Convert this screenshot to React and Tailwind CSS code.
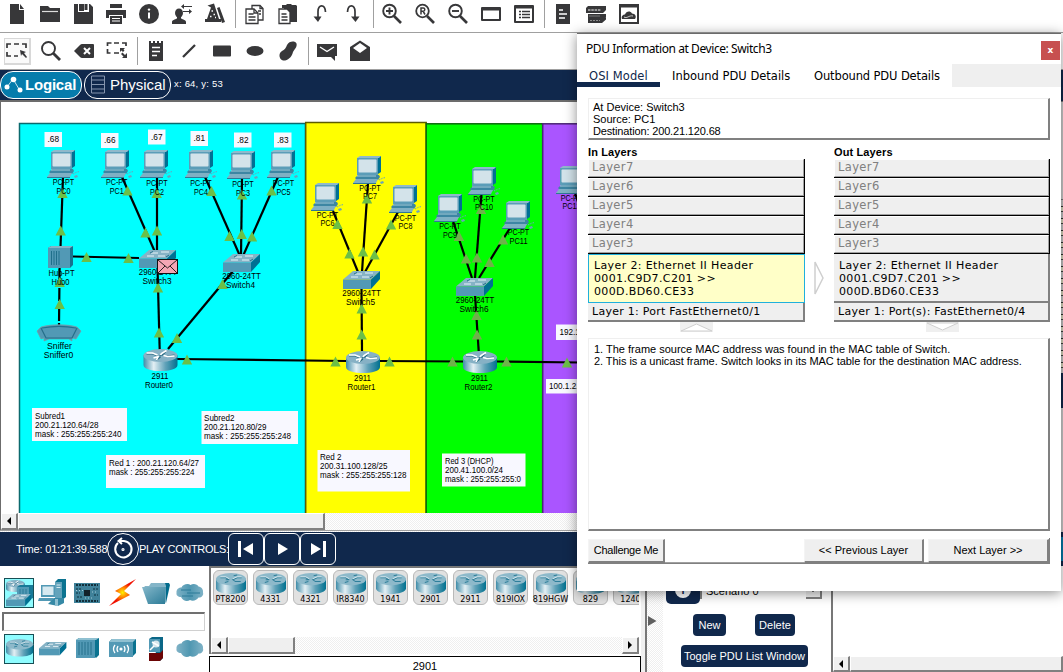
import React from "react";

const INK = "#373739";

/* ---------- toolbar icons (24 x 24) ---------- */
const toolIcons = {
  file: <path d="M5 2h9v6h5v14H5zM15 2l4 5h-4z" />,
  folder: (
    <>
      <path d="M2 4h8l2 2h10v14H2z" />
      <path d="M4 9.5h16" stroke="#ddd" strokeWidth="1.2" />
    </>
  ),
  save: <path fillRule="evenodd" d="M3 2h4v8h11V2h1l3 3v17H3zM13.500 2h3v6h-3zM8 2h5v7H8z" />,
  print: (
    <>
      <path d="M6 2h12v4H6zM2 8h20v8h-3v-3H5v3H2z" />
      <path d="M6 14h12v8H6z" />
      <path d="M8 16.500h8M8 19h8" stroke="#fff" strokeWidth="1" />
    </>
  ),
  info: (
    <>
      <circle cx="12" cy="12" r="10" />
      <path d="M12 10.500v6" stroke="#fff" strokeWidth="2" />
      <circle cx="12" cy="7.600" r="1.200" fill="#fff" />
    </>
  ),
  user: (
    <>
      <ellipse cx="9" cy="11" rx="4" ry="4.500" />
      <path d="M2 22v-2c0-2 3-2.500 5-3.500v-3h4v3c2 1 5 1.500 5 3.500v2zM11 4.500l3-2.500v2h8v1h-8v2zM22 9.500L19 7v2h-6v1h6v2z" />
    </>
  ),
  wizard: (
    <>
      <path d="M4.500 3.500L11 1.500l5 15.500h2v3H2v-3h2l4-11.500zM14 6l2.500-1L22 20l-3 1z" />
      <path d="M8.500 9h1.500M10.500 12.500h1.500M7 14.500h1.500M12 15.500h1" stroke="#fff" strokeWidth="1.300" />
    </>
  ),
  copy: (
    <g fill="#fff" stroke={INK} strokeWidth="1.300">
      <path d="M10 3.500h8l3 3V18H10z" />
      <path d="M18 3.500v3h3M16 9h3M17 12h2" fill="none" />
      <path d="M4 7h8l4 4v10.500H4z" />
      <path d="M12 7v4h4M6.500 12h5M6.500 15h7M6.500 18h7" fill="none" />
    </g>
  ),
  paste: (
    <>
      <path d="M7 3h4l1-1h4l1 1h4l1 1v16H9V6H7z" />
      <g fill="#fff" stroke={INK} strokeWidth="1.300">
        <path d="M4 7h8l3 3v11.500H4z" />
        <path d="M6.500 12h5M6.500 15h6M6.500 18h6" fill="none" />
      </g>
    </>
  ),
  undo: (
    <>
      <path d="M10 17V9.500C10 2 17 2 17.500 10" fill="none" stroke={INK} strokeWidth="1.700" />
      <path d="M5.500 14.500h8L10 20z" />
    </>
  ),
  redo: (
    <>
      <path d="M6.500 10C7 2 14 2 14 9.500V17" fill="none" stroke={INK} strokeWidth="1.700" />
      <path d="M10 14.500h8.500L14.500 20z" />
    </>
  ),
  zoomIn: (
    <g fill="none" stroke={INK} strokeWidth="1.900">
      <circle cx="9.500" cy="9" r="6.300" />
      <path d="M14 14l7 7" strokeWidth="2.600" />
      <path d="M6 9h7M9.500 5.500v7" />
    </g>
  ),
  zoomReset: (
    <g fill="none" stroke={INK} strokeWidth="1.800">
      <circle cx="9.500" cy="9" r="6.300" />
      <path d="M14 14l7 7" strokeWidth="2.600" />
      <path d="M8 12.500V6h2.300c2 0 2 3.200 0 3.200H8M10 9.200l2 3.300" strokeWidth="1.500" />
    </g>
  ),
  zoomOut: (
    <g fill="none" stroke={INK} strokeWidth="1.900">
      <circle cx="9.500" cy="9" r="6.300" />
      <path d="M14 14l7 7" strokeWidth="2.600" />
      <path d="M6 9h7" />
    </g>
  ),
  rect: <path fillRule="evenodd" d="M3 5h18q1 0 1 1v12q0 1-1 1H3q-1 0-1-1V6q0-1 1-1zM4 8.500V17h16V8.500z" />,
  list: (
    <>
      <path fillRule="evenodd" d="M3 3h18q1 0 1 1v16q0 1-1 1H3q-1 0-1-1V4q0-1 1-1zM4 6.500V19h16V6.500z" />
      <path d="M7 9.500h2M7 12.500h2M7 15.500h2M10 9.500h8M10 12.500h8M10 15.500h8" stroke={INK} strokeWidth="1.500" />
    </>
  ),
  doc: (
    <>
      <path d="M5 2h14v20H5z" />
      <path d="M8 8h4M8 12h8M8 16h6" stroke="#fff" strokeWidth="1.400" />
    </>
  ),
  devices: (
    <>
      <path d="M2 6l2-2h18v4l-3 3H2zM4 12h18v3l-4 1H4zM4 16h14l4-3.500v5L18 21H4z" />
      <path d="M4 8h13" stroke="#b5b5b5" strokeWidth="1.500" strokeDasharray="2.500 .800" />
      <path d="M5 14h11" stroke="#8c8c8c" strokeWidth=".8" />
      <path d="M6 18.500h10" stroke="#8c8c8c" strokeDasharray="2 1" />
    </>
  ),
  cloudWin: (
    <>
      <path fillRule="evenodd" d="M2 2h20v20H2zM4 5.500V20h16V5.500z" />
      <path d="M5 17c-1-3 1-4.500 3-4.500 1-3 5-4.500 7-1 3 0 5 3 3 5.500z" />
      <path d="M7 15c3 2 5-2 9-1" stroke="#ccc" fill="none" />
    </>
  ),
  select: (
    <>
      <path d="M2 9V5h4M9 5h5M17 5h4v4M2 13v4h4M9 17h4" fill="none" stroke={INK} strokeWidth="1.700" />
      <path d="M15 11l6 2-2 1 3 4-1 1-4-4-1 2z" />
    </>
  ),
  search: (
    <g fill="none" stroke={INK}>
      <circle cx="9.500" cy="9.500" r="6.500" strokeWidth="1.900" />
      <path d="M14 14l7 7" strokeWidth="2.800" />
    </g>
  ),
  del: (
    <>
      <path d="M2 12l6-6q1-1 2-1h11q1 0 1 1v12q0 1-1 1H10q-1 0-2-1z" />
      <path d="M12 9l6 6M18 9l-6 6" stroke="#fff" strokeWidth="2" />
    </>
  ),
  resize: (
    <>
      <path d="M2.500 7V4h4M9 4h5M17 4h4v3M2.500 10v4h3M9 14h5" fill="none" stroke={INK} strokeWidth="1.700" />
      <path d="M15 9h5l-1.500 1.500 1 1L18 13l-1.500-1.500L15 13zM22 19h-5l1.500-1.500-2.500-2.500 1.500-1.500 2.500 2.500L22 14z" />
    </>
  ),
  note: (
    <>
      <path d="M5 2h2v2h2V2h2v2h2V2h2v2h2V2h2v20H5z" />
      <path d="M8 8.500h8M8 12.500h8M8 16.500h5" stroke="#fff" strokeWidth="1.400" />
    </>
  ),
  line: <path d="M6 18L18 6" stroke={INK} strokeWidth="2.300" />,
  fillRect: <rect x="3" y="6.500" width="18" height="11" rx="1" />,
  ellipse: <ellipse cx="12" cy="12" rx="8.500" ry="5" />,
  blob: <path d="M11 6c2-4 8-4.500 9.500-1.500C21.500 8 18 11 17 13c-1.500 6-6 9-10 8.500C2.500 20 2.500 14 6 12c2.500-1 4-3 5-6z" />,
  mail: (
    <>
      <path d="M2 5h20v12h-2v5l-4-4H2z" />
      <path d="M5 8l7 4.500L19 8" fill="none" stroke="#fff" strokeWidth="1.400" />
    </>
  ),
  mailOpen: (
    <>
      <path d="M2 8l10-6.500L22 8v14H2z" />
      <path d="M5 9l7-5 7 5-7 5z" fill="#fff" />
    </>
  ),
};

const Tool = ({ name, active }) => (
  <div className="flex w-[33px] shrink-0 items-center justify-center">
    {active ? (
      <div className="flex h-[27px] w-[27px] items-center justify-center border border-r-2 border-b-2 border-[#d8d8d8] bg-[#fafafa]">
        <svg viewBox="0 0 24 24" className="h-6 w-6 shrink-0" fill={INK}>{toolIcons[name]}</svg>
      </div>
    ) : (
      <svg viewBox="0 0 24 24" className="h-6 w-6 shrink-0" fill={INK}>{toolIcons[name]}</svg>
    )}
  </div>
);
const Sep = ({ className = "" }) => (
  <div className={`flex w-[6px] shrink-0 justify-end pr-px ${className}`}>
    <div className="w-px bg-[#a0a0a0]" />
  </div>
);

/* ---------- topology ---------- */
const PC = ({ x, y }) => (
  <g transform={`translate(${x} ${y})`}>
    <path d="M3-1h21v16l-3 2z" fill="#007093" />
    <path d="M0 1l3-2h21l-2 2z" fill="#8fb9cb" />
    <rect x="0" y="1" width="21" height="17" fill="#5b9db8" />
    <rect x="1.500" y="2.500" width="18" height="13" rx="1" fill="#d3e3ea" />
    <path d="M1 18h21l1 2-2 3H0l-2-2z" fill="#3d86a3" />
    <path d="M0 19h19" stroke="#a6cbd9" />
    <path d="M-1 22h22l-2 4H-4z" fill="#7fb0c4" />
    <path d="M-4 26h23v1H-4z" fill="#2f7896" />
    <path d="M23 25l3-1 1 2-3 1z" fill="#6aa3ba" />
    <path d="M22 23l4-2 3-.500" stroke="#6aa3ba" fill="none" strokeDasharray="1.500 1" />
  </g>
);
const Switch = ({ x, y }) => (
  <g transform={`translate(${x} ${y})`}>
    <path d="M0 8.500L10 0h27L28 8.500z" fill="#86b3c6" />
    <path d="M0 8.500h28V18H0z" fill="#5299b5" />
    <path d="M28 8.500L37 0v8l-9 10z" fill="#007093" />
    <path d="M12 3h7M22 2h8M8 6h7M19 6h7" stroke="#e8f3f7" strokeWidth="1.200" />
    <path d="M14 1.500l-3 1.500M27 7l3-2" stroke="#25708c" />
  </g>
);
const RouterShape = () => (
  <>
    <path d="M0 6v10c0 8 34 8 34 0V6z" fill="url(#rg)" />
    <ellipse cx="17" cy="6.500" rx="17" ry="6.500" fill="#86b1c5" />
    <g fill="none" stroke="#24677f" strokeWidth="1.200" transform="translate(0 1)">
      <path d="M3 4h6l5 2M22 2l-3 3-3 1M31 5l-8 1M13 10l4-3" />
    </g>
    <g fill="none" stroke="#fff" strokeWidth="1.600">
      <path d="M3 4h6l5 2M23 1.500l-5 3-1 1.500M31 7l-7 .500-4-1M13 11l2-4M10 9l5-1.500" />
    </g>
  </>
);
const TileRouter = () => (
  <>
    <path d="M0 6v10c0 8 34 8 34 0V6z" fill="url(#rg)" />
    <ellipse cx="17" cy="6.500" rx="17" ry="6.500" fill="#8db9ca" />
    <path d="M5 5h6l4 2h-4M29 5h-5l-5 2 3 2h6M20 3l4-1M10 10l4-1" fill="none" stroke="#2f7f9b" strokeWidth="1.100" />
    <path d="M5 4h6l4 2M29 4h-5l-5 2" fill="none" stroke="#e4f0f5" strokeWidth=".9" />
  </>
);
const Router = ({ x, y }) => (
  <g transform={`translate(${x} ${y})`}><RouterShape /></g>
);
const Label = ({ x, y, w, children, anchor = "middle" }) => (
  <text x={anchor === "middle" ? x - w / 2 : x} y={y} textLength={w} lengthAdjust="spacingAndGlyphs" fontSize="8.6" fill="#000">
    {children}
  </text>
);

const pcs = [
  ["PC0", 51, 151, 63.500, 185], ["PC1", 105, 151, 116.700, 185], ["PC2", 144, 151, 157, 186],
  ["PC4", 189, 151, 201, 186], ["PC3", 231, 152, 243, 187], ["PC5", 271, 151, 283.500, 186],
  ["PC6", 315, 184, 327.500, 217.500], ["PC7", 357, 157, 370, 190.500], ["PC8", 393, 186, 405.500, 220.500],
  ["PC9", 438, 195, 450, 229], ["PC10", 472, 168, 484, 201.500], ["PC11", 506, 202, 518.500, 235],
  ["PC12", 560, 167, 571.500, 200.500],
];
const links = [
  [63, 177, 60.500, 247], [73, 256.500, 139, 258], [122, 177, 155, 252], [157, 177, 157, 252],
  [205, 177, 240, 256], [242, 178, 241, 256], [278, 177, 243, 256], [157.500, 267, 159.700, 350],
  [233, 271, 168, 349], [177, 359, 346, 361], [380, 361, 463, 361.500], [497, 361.500, 580, 362.500],
  [333, 211, 358, 272], [368, 183, 362, 272], [398, 212, 365, 272], [361.500, 289, 362, 351],
  [453, 221, 472, 278], [481.500, 194, 475, 278], [510, 228, 479, 278], [475, 295, 478.700, 351],
  [575, 193, 579, 205],
];
const marks = [
  [62.500, 193], [60.700, 230.500], [127.500, 190.500], [145.500, 232.500], [156.700, 193], [157, 230.500],
  [211.500, 191], [229.500, 236], [242, 194.500], [241.700, 234], [271.500, 190.500], [252, 236.500],
  [86.500, 257], [128.500, 258], [59.700, 282], [59.700, 304], [158, 287.500], [222.500, 284],
  [159, 332.500], [177, 338], [187, 359.500], [337.500, 224], [349.500, 253.500], [367, 198.500],
  [363, 251.500], [391, 224.500], [374.500, 254.500], [361.700, 308.500], [361.700, 334.500],
  [335.500, 361.500], [389.500, 361.500], [567, 362.500],
];
const dimMarks = [
  [459, 236], [466, 258.500], [481, 209], [477, 257.500], [503, 239.500], [489.500, 262],
  [476.500, 315], [477, 334.500], [452.500, 361.500], [506.500, 361.500],
];
const tri = ([x, y]) => `M${x - 5.2} ${y + 5}L${x} ${y - 5}L${x + 5.2} ${y + 5}z`;
const hosts = [[".68", 44.500, 132], [".66", 101, 133], [".67", 148, 129.500], [".81", 190.500, 131], [".82", 234, 132.500], [".83", 274, 132.500]];
const notes = [
  [32, 408, 95, 33, 35, 419, [["Subred1", 30], ["200.21.120.64/28", 63.500], ["mask : 255:255:255:240", 86.500]]],
  [201.500, 411, 96.500, 33, 204, 421, [["Subred2", 30.500], ["200.21.120.80/29", 62.500], ["mask : 255:255:255:248", 87]]],
  [106, 455, 99, 33, 109, 466, [["Red 1 : 200.21.120.64/27", 90], ["mask : 255:255:255:224", 85.500]]],
  [317.500, 450, 92.500, 41.500, 320, 460, [["Red 2", 21.500], ["200.31.100.128/25", 67.500], ["mask : 255:255:255:128", 86.500]]],
  [442, 453.500, 83.500, 33, 445, 464, [["Red 3 (DHCP)", 48.500], ["200.41.100.0/24", 58], ["mask : 255:255:255:0", 76]]],
  [556, 324.500, 40, 15.500, 559.500, 335, [["192.1.2.0", 34]]],
  [546, 379, 46, 14.500, 549, 389, [["100.1.2.0", 34]]],
];

const Topology = () => (
  <svg viewBox="1 102 640 411" className="block h-[411px] w-[640px] shrink-0" fontFamily="'Liberation Sans', Arial, sans-serif">
    <g strokeWidth="1.500">
      <rect x="19.500" y="123.500" width="286" height="400" fill="#0ff" stroke="#0b6a6e" />
      <rect x="305.700" y="122.500" width="120.500" height="400" fill="#ff0" stroke="#5d5d00" />
      <rect x="426.200" y="123.800" width="116.500" height="400" fill="#0f0" stroke="#0a6a0a" />
      <rect x="542.700" y="123.800" width="140" height="400" fill="#a5f" stroke="#4b2675" />
    </g>
    <g stroke="#000" strokeWidth="2.200">
      {links.map((l, i) => <line key={i} x1={l[0]} y1={l[1]} x2={l[2]} y2={l[3]} />)}
      <line x1="59.600" y1="268" x2="59" y2="325" strokeDasharray="13 2 3 2" />
    </g>
    {pcs.map(([n, x, y]) => <PC key={n} x={x} y={y} />)}
    <Switch x={139} y={250} /><Switch x={223} y={254} /><Switch x={343} y={271} /><Switch x={456} y={278} />
    <Router x={143.500} y={349} /><Router x={346} y={351} /><Router x={463} y={351} />
    <g>
      <path d="M48 248l3-2h22v19l-3 3H48z" fill="#17728f" />
      <path d="M48 248l3-2h22l-3 2z" fill="#86b3c6" />
      <rect x="48" y="248" width="22" height="20" fill="#5299b5" />
      <path d="M51.500 251v14M54 251v14M56.500 251v14M59 251v14" stroke="#1f6f8b" />
    </g>
    <g>
      <path d="M37 331l4-4c10-3 26-3 36 0l4 4-5 8-4-1v3l-3-2H49l-5 2v-3l-3 1z" fill="#5299b5" stroke="#7d98a0" strokeWidth=".7" />
      <path d="M41 328l5 10h26l5-10M42 328c10-2 24-2 34 0" fill="none" stroke="#256f8a" strokeWidth="1.200" />
    </g>
    <path d={marks.map(tri).join("")} fill="#6cbf47" />
    <path d={dimMarks.map(tri).join("")} fill="#6fb24a" />
    {pcs.map(([n, , , cx, by]) => (
      <g key={n}>
        <Label x={cx} y={by} w={21.500}>PC-PT</Label>
        <Label x={cx} y={by + 8.800} w={n.length > 3 ? 18 : 14}>{n}</Label>
      </g>
    ))}
    {[["Switch3", 158, 275], ["Switch4", 241.500, 279], ["Switch5", 361.500, 296], ["Switch6", 475, 303]].map(([n, x, y]) => (
      <g key={n}><Label x={x} y={y} w={38.500}>2960-24TT</Label><Label x={x - 1} y={y + 8.700} w={29}>{n}</Label></g>
    ))}
    {[["Router0", 160, 379], ["Router1", 362.500, 381.300], ["Router2", 479.500, 381.300]].map(([n, x, y]) => (
      <g key={n}><Label x={x} y={y} w={17}>2911</Label><Label x={x - 1} y={y + 8.800} w={28}>{n}</Label></g>
    ))}
    <Label x={61.500} y={276.300} w={26}>Hub-PT</Label><Label x={60.500} y={285} w={18}>Hub0</Label>
    <Label x={59.500} y={349} w={25}>Sniffer</Label><Label x={58.500} y={358} w={29.500}>Sniffer0</Label>
    <g>
      <rect x="157.500" y="259.500" width="20" height="14" fill="#f3a6b4" stroke="#111" />
      <path d="M158 260l9.500 8 9.500-8M158 273l7-7M177 273l-7-7" fill="none" stroke="#111" strokeWidth=".9" />
    </g>
    {hosts.map(([t, x, y]) => (
      <g key={t}><rect x={x} y={y} width="17.500" height="15" fill="#f8f8ff" /><Label x={x + 8.800} y={y + 10.300} w={11.500}>{t}</Label></g>
    ))}
    {notes.map(([x, y, w, h, tx, ty, rows]) => (
      <g key={ty + tx}>
        <rect x={x} y={y} width={w} height={h} fill="#f8f8ff" />
        {rows.map(([t, tw], i) => <Label key={t} anchor="start" x={tx} y={ty + i * 8.900} w={tw}>{t}</Label>)}
      </g>
    ))}
  </svg>
);

/* ---------- classic widgets ---------- */
const Arrow = ({ dir }) => (
  <svg viewBox="0 0 8 8" className="h-2 w-2"><path d={dir === "left" ? "M6 0v8L2 4z" : "M2 0v8l4-4z"} /></svg>
);
const ScrollBtn = ({ dir }) => (
  <div className="flex w-[17px] shrink-0 items-center justify-center border-t border-r-2 border-b-2 border-l border-t-white border-r-[#808080] border-b-[#808080] border-l-white bg-[#f0f0f0]">
    <Arrow dir={dir} />
  </div>
);
const Thumb = ({ className }) => (
  <div className={`border-t border-r-2 border-b-2 border-l border-t-white border-r-[#808080] border-b-[#808080] border-l-white bg-[#efefef] ${className}`} />
);
const DITHER = "bg-[repeating-conic-gradient(#ffffff_0_25%,#efefef_0_50%)] bg-[length:2px_2px]";

/* ---------- device palette ---------- */
const cloud = <path d="M5 19c-3 0-5-2-4.500-4C0 11 3 9.500 5.500 9.500 6.500 6.500 12 5 14.500 7c2.500-2 7-1 8 1.500 3 .500 5 3 4.500 6 1 3-2 5.500-4.500 5-1.500 3-6 4-8.500 2.500C11 24 7 23 5 19z" fill="url(#cg)" />;
const palette = {
  network: (
    <>
      <g transform="translate(1 2) scale(.55)"><RouterShape /></g>
      <path d="M12 9l3-2h13v13l-4 2V9z" fill="#177a98" /><path d="M12 9h12v13H12z" fill="#5299b5" />
      <path d="M15 11v9M18 11v9M21 11v9" stroke="#2b7b97" />
      <g transform="translate(1 16) scale(.68)"><Switch x={0} y={0} /></g>
    </>
  ),
  end: (
    <>
      <path d="M16 4l3-3h8v18l-4 3h-7z" fill="#0b7390" /><path d="M16 4h7v18h-7z" fill="#62a3bb" />
      <path d="M17.500 7h4M17.500 9.500h4" stroke="#d6e9f0" />
      <rect x="2" y="7" width="14" height="12" fill="#5299b5" /><rect x="3.500" y="8.500" width="11" height="8.500" fill="#d6e9f0" />
      <path d="M0 20h15l-2 3H-1z" fill="#5299b5" /><path d="M9 26l6-6h10v5l-6 3z" fill="#3689a6" /><path d="M16 21h3v7h-3z" fill="#8fc0d1" />
    </>
  ),
  board: (
    <>
      <rect x="1" y="5" width="26" height="20" fill="#3f8199" /><rect x="11" y="12" width="6" height="6" fill="#12202a" />
      <path d="M3 7h22M3 23h22" stroke="#12303c" strokeWidth="2" strokeDasharray="2 1" />
      <path d="M3 11h5M20 11h5M3 15h4M21 17h4M4 19h5" stroke="#1d4a5b" strokeWidth="1.500" strokeDasharray="2 1" />
      <path d="M3 12.500h7M19 14h6M12 20h8" stroke="#a6cbd9" strokeDasharray="1 2" />
    </>
  ),
  bolt: <path d="M28 1L7 13l6 3L1 28l21-11-6-4z" fill="url(#bg)" />,
  folder: (
    <>
      <path d="M22 5h5l1 2-4 18z" fill="#006b8c" /><path d="M2 8h5l2-3h14l1 3v16l-1 1z" fill="#84b5c8" />
      <path d="M0 9h24l-1 17H6z" fill="url(#fg)" />
    </>
  ),
  cloudLines: <>{cloud}<path d="M5 12h10M11 15h13M6 18h11" stroke="#2b7b97" strokeWidth="1.200" /></>,
  router: <g transform="translate(1 5) scale(.8)"><TileRouter /></g>,
  sw: <g transform="translate(0 8) scale(.74)"><Switch x={0} y={0} /></g>,
  hub: (
    <>
      <path d="M3 6l3-2h20v17l-3 3z" fill="#0b7390" /><path d="M3 6l3-2h20l-3 2z" fill="#8fc0d1" /><path d="M3 6h19v18H3z" fill="#5299b5" />
      <path d="M6 8v13M9 8v13M12 8v13M15 8v13M18 8v13" stroke="#25708c" />
    </>
  ),
  wifi: (
    <>
      <path d="M1 8l3-3h24v14l-3 3z" fill="#0b7390" /><path d="M1 8l3-3h24l-3 3z" fill="#8fc0d1" /><path d="M1 8h24v15H1z" fill="#5299b5" />
      <circle cx="13" cy="15" r="1.600" fill="#fff" />
      <path d="M10 12q-2 3 0 6M16 12q2 3 0 6M7 11q-3 4 0 8M19 11q3 4 0 8" stroke="#fff" fill="none" strokeWidth="1.300" />
    </>
  ),
  firewall: (
    <>
      <path d="M7 5l3-2h11v21l-3 3z" fill="#0b6787" /><path d="M7 5h11v13H7z" fill="#5299b5" /><path d="M7 19h11l3-3v8l-3 3H7z" fill="#6b0505" />
      <circle cx="14" cy="10" r="3.500" fill="#d8e6ec" /><path d="M8 16l4-4M10 8l7 4" stroke="#fff" strokeWidth="1.500" />
    </>
  ),
  cloud,
};
const Pal = ({ name, active }) => (
  <div className={active ? "flex h-[30px] w-[30px] items-center justify-center border border-[#174f55] bg-[#8ffcff]" : "flex h-[30px] w-[30px] items-center justify-center"}>
    <svg viewBox="0 0 28 30" className="h-[30px] w-[28px] shrink-0 overflow-visible">{palette[name]}</svg>
  </div>
);
const PalRow = ({ items }) => (
  <div className="flex h-[30px] gap-[4.200px] pl-1">
    {items.map((n, i) => <Pal key={n} name={n} active={i === 0} />)}
  </div>
);
const models = ["PT8200", "4331", "4321", "IR8340", "1941", "2901", "2911", "819IOX", "819HGW", "829", "1240"];

const PlayBtn = ({ children }) => (
  <div className="flex h-8 w-9 shrink-0 items-center justify-center rounded-md border border-white">
    <svg viewBox="0 0 24 24" className="h-6 w-6" fill="#fff">{children}</svg>
  </div>
);

/* ---------- PDU dialog ---------- */
const Layer = ({ children }) => (
  <div className="h-[19px] border-r border-b border-black">
    <div className="flex h-[18px] items-center border-t border-r border-b border-l border-t-white border-r-[#a0a0a0] border-b-[#a0a0a0] border-l-white bg-[#efefef] pl-[3px] text-[11.500px] text-[#808080]">{children}</div>
  </div>
);
const LayerColumn = ({ title, active, port, widthClass }) => (
  <div className={widthClass}>
    <div className="h-[13px] font-['Liberation_Sans',Arial,sans-serif] text-[11px] leading-[13px] font-bold tracking-[0.12px]">{title}</div>
    <div className="font-['DejaVu_Sans',Verdana,sans-serif] text-[11px] tracking-[0.370px]">
      {["Layer7", "Layer6", "Layer5", "Layer4", "Layer3"].map((l) => <Layer key={l}>{l}</Layer>)}
      <div className={active
        ? "h-[49px] border border-[#1fb0dc] bg-[#ffffc8] pt-[4px] pl-[5px] leading-[13px] whitespace-nowrap"
        : "h-[49px] border-r-2 border-b-2 border-[#808080] bg-[#efefef] pt-[5px] pl-[5px] leading-[13px] whitespace-nowrap"}>
        Layer 2: Ethernet II Header<br />0001.C9D7.C201 &gt;&gt;<br />000D.BD60.CE33
      </div>
      <div className="flex h-[19px] items-center border-r-2 border-b-2 border-[#808080] bg-[#efefef] pt-px pl-[4px] tracking-[0.260px] whitespace-nowrap">{port}</div>
    </div>
  </div>
);
const DlgBtn = ({ className, children }) => (
  <div className={`flex items-center justify-center border-t border-r-2 border-b-2 border-l border-t-[#f4f4f4] border-r-[#808080] border-b-[#808080] border-l-[#f4f4f4] bg-[#efefef] whitespace-nowrap ${className}`}>{children}</div>
);

const Dialog = () => (
  <div className="absolute top-[33px] left-[577px] flex h-[558px] w-[484px] flex-col border-t border-[#6b6b6b] bg-white font-['Liberation_Sans',Arial,sans-serif] text-[11px] text-black shadow-[0_2px_12px_rgba(0,0,0,0.45)]">
    <div className="flex h-[30px] shrink-0 justify-between pl-[9px]">
      <div className="pt-[6px] font-['Noto_Sans','Open_Sans',sans-serif] text-[12px] leading-[18px] tracking-[-0.420px] whitespace-nowrap">PDU Information at Device: Switch3</div>
      <div className="mt-[7px] mr-px flex h-[19px] w-[19px] items-center justify-center bg-[#c75050] font-['DejaVu_Sans',sans-serif] text-[9px] font-bold text-white">x</div>
    </div>
    <div className="flex h-[23px] shrink-0 font-['DejaVu_Sans',Verdana,sans-serif] text-[11.5px] leading-[24px] whitespace-nowrap">
      <div className="w-[83px] border-b-[5px] border-[#10284c] pl-[12px] tracking-[0.100px] text-[#10284c]">OSI Model</div>
      <div className="w-[142px] pl-[12px]">Inbound PDU Details</div>
      <div className="w-[150px] pl-[12px] tracking-[-0.130px]">Outbound PDU Details</div>
      <div className="flex-1 bg-[#efefef]" />
    </div>
    <div className="mx-[11px] mt-[11px] h-[42px] shrink-0 border-t border-r-2 border-b-2 border-l border-t-[#efefef] border-r-[#808080] border-b-[#808080] border-l-[#efefef] pt-[2px] pl-[4px] leading-[12px]">
      At Device: Switch3<br />Source: PC1<br /><span className="tracking-[-0.150px]">Destination: 200.21.120.68</span>
    </div>
    <div className="mt-[6px] ml-[11px] flex shrink-0">
      <LayerColumn title="In Layers" active port="Layer 1: Port FastEthernet0/1" widthClass="w-[217px]" />
      <div className="flex w-[29px] justify-center pt-[115px]">
        <svg viewBox="0 0 11 34" className="h-[34px] w-[11px]"><path d="M1 1v32l8-16z" fill="#fff" stroke="#cfcfcf" strokeWidth="1.500" /></svg>
      </div>
      <LayerColumn title="Out Layers" port="Layer 1: Port(s): FastEthernet0/4" widthClass="w-[216px]" />
    </div>
    <div className="flex h-[10px] shrink-0 pl-[103px]">
      <svg viewBox="0 0 33 10" className="mr-[213px] h-[10px] w-[33px]"><path d="M0 0h33v10H0z" fill="#efefef" /><path d="M1 9l15.500-7L32 9z" fill="#fff" stroke="#cfcfcf" /></svg>
      <svg viewBox="0 0 33 10" className="h-[10px] w-[33px]"><path d="M0 0h33v10H0z" fill="#efefef" /><path d="M1 1l15.500 7L32 1z" fill="#fff" stroke="#cfcfcf" /></svg>
    </div>
    <div className="mx-[11px] mt-[6px] h-[193px] shrink-0 border-t border-r-2 border-b-2 border-l border-t-[#efefef] border-r-[#808080] border-b-[#808080] border-l-[#efefef] pt-[4px] pl-[5px] leading-[12px] whitespace-nowrap">
      1. The frame source MAC address was found in the MAC table of Switch.<br />
      <span className="tracking-[-0.055px]">2. This is a unicast frame. Switch looks in its MAC table for the destination MAC address.</span>
    </div>
    <div className="mx-[11px] mt-[7px] flex h-[26px] shrink-0 border-r border-b border-[#808080] pt-px">
      <DlgBtn className="w-[77px] tracking-[-0.300px]">Challenge Me</DlgBtn>
      <div className="w-[139px] border-b border-[#a0a0a0]" />
      <DlgBtn className="w-[120px]">&lt;&lt; Previous Layer</DlgBtn>
      <div className="w-[4px] border-b border-[#a0a0a0]" />
      <DlgBtn className="flex-1">Next Layer &gt;&gt;</DlgBtn>
    </div>
  </div>
);

const NavyBtn = ({ className, children }) => (
  <div className={`flex h-[22px] items-center justify-center rounded-[4px] bg-[#10284c] text-[11px] text-white whitespace-nowrap ${className}`}>{children}</div>
);

export default function App() {
  return (
    <div className="relative flex h-[672px] w-[1063px] flex-col overflow-hidden bg-white font-['Liberation_Sans',Arial,sans-serif] text-[11px] text-black">
      <svg className="absolute h-0 w-0">
        <defs>
          <linearGradient id="rg"><stop offset="0" stopColor="#3f8ca8" /><stop offset=".3" stopColor="#e3eff4" /><stop offset=".65" stopColor="#5fa1b8" /><stop offset="1" stopColor="#00708f" /></linearGradient>
          <linearGradient id="cg"><stop offset="0" stopColor="#7fb2c6" /><stop offset=".5" stopColor="#4f97b1" /><stop offset="1" stopColor="#7fb2c6" /></linearGradient>
          <linearGradient id="fg" x2="1" y2="1"><stop offset="0" stopColor="#84b7ca" /><stop offset="1" stopColor="#2b7b97" /></linearGradient>
          <radialGradient id="bg"><stop offset="0" stopColor="#fff200" /><stop offset=".35" stopColor="#ff8a00" /><stop offset=".75" stopColor="#f01000" /></radialGradient>
        </defs>
      </svg>

      <div className="flex h-[33px] shrink-0 border-b border-[#a0a0a0] pb-1">
        {["file", "folder", "save", "print", "info", "user", "wizard"].map((n) => <Tool key={n} name={n} />)}
        <Sep />
        {["copy", "paste", "undo", "redo"].map((n) => <Tool key={n} name={n} />)}
        <Sep />
        {["zoomIn", "zoomReset", "zoomOut", "rect", "list"].map((n) => <Tool key={n} name={n} />)}
        <Sep />
        {["doc", "devices", "cloudWin"].map((n) => <Tool key={n} name={n} />)}
      </div>
      <div className="flex h-[37px] shrink-0 border-b border-[#a0a0a0]">
        <div className="flex pl-px">
          {["select", "search", "del", "resize"].map((n, i) => <Tool key={n} name={n} active={i === 0} />)}
        </div>
        <Sep className="py-1 pr-[2px]" />
        {["note", "line", "fillRect", "ellipse", "blob"].map((n) => <Tool key={n} name={n} />)}
        <Sep className="py-1 pr-[2px]" />
        {["mail", "mailOpen"].map((n) => <Tool key={n} name={n} />)}
      </div>

      <div className="flex h-[30px] shrink-0 items-center bg-[#10284c] text-white">
        <div className="flex h-[28px] w-[82px] shrink-0 items-center rounded-[13px] border border-white bg-[#057cac] pl-[3px]">
          <svg viewBox="0 0 20 20" className="h-5 w-5 shrink-0" fill="#fff"><path d="M3 12L9 4l6 10" fill="none" stroke="#fff" strokeWidth=".8" /><circle cx="3" cy="12" r="2.500" /><circle cx="9.500" cy="4.500" r="2.800" /><circle cx="16" cy="15" r="2.500" /></svg>
          <span className="ml-[1px] text-[15px] font-bold tracking-[-0.200px]">Logical</span>
        </div>
        <div className="ml-[2px] flex h-[28px] w-[87px] shrink-0 items-center rounded-[13px] border border-white pl-[6px]">
          <svg viewBox="0 0 14 20" className="h-5 w-[14px] shrink-0"><path d="M.5 1h13v17H.5zM.5 5h13M.5 9.500h13M.5 14h13" fill="none" stroke="#8494ad" /></svg>
          <span className="ml-[5px] text-[15px] tracking-[-0.050px]">Physical</span>
        </div>
        <span className="mb-px ml-[3px] text-[9.500px] tracking-[0.200px] whitespace-nowrap">x: 64, y: 53</span>
      </div>

      <div className="flex h-[413px] shrink-0 overflow-hidden border-t-2 border-l border-[#6c6c6c] bg-white">
        <Topology />
      </div>
      <div className={`flex h-[17px] shrink-0 border-l border-[#6c6c6c] ${DITHER}`}>
        <ScrollBtn dir="left" />
        <Thumb className="w-[307px]" />
      </div>
      <div className={`h-[2px] shrink-0 border-t border-[#a0a0a0] ${DITHER}`} />

      <div className="flex h-[34px] shrink-0 items-center bg-[#10284c] pl-[16px] text-white whitespace-nowrap">
        <span className="w-[91px] text-[11px] tracking-[-0.160px]">Time: 01:21:39.588</span>
        <div className="flex h-8 w-8 shrink-0 items-center justify-center rounded-full border border-white">
          <svg viewBox="0 0 24 24" className="h-6 w-6" fill="none" stroke="#fff" strokeWidth="2"><path d="M7 6a8.200 8.200 0 1 0 6-2H8" /><path d="M11 1L7.500 4l3.500 3" /><circle cx="12" cy="12.500" r=".6" /></svg>
        </div>
        <span className="w-[89px] text-[11px] tracking-[-0.330px]">PLAY CONTROLS:</span>
        <PlayBtn><path d="M4 4h3v16H4zM19 6v12L9 12z" /></PlayBtn>
        <PlayBtn><path d="M8 6v12l10-6z" /></PlayBtn>
        <PlayBtn><path d="M17 4h3v16h-3zM5 6v12l10-6z" /></PlayBtn>
      </div>

      <div className="flex h-[106px] shrink-0">
        <div className="w-[209px] shrink-0 pt-[12px]">
          <PalRow items={["network", "end", "board", "bolt", "folder", "cloudLines"]} />
          <div className="mt-[4px] ml-[2px] h-[19px] w-[203px] border-t-2 border-r border-b border-l-2 border-t-[#707070] border-r-[#d0d0d0] border-b-[#d0d0d0] border-l-[#707070]" />
          <div className="mt-[3px]"><PalRow items={["router", "sw", "hub", "wifi", "firewall", "cloud"]} /></div>
        </div>
        <div className="flex w-[432px] shrink-0 flex-col">
          <div className="flex h-[88px] shrink-0 flex-col border-t-2 border-l-2 border-[#777]">
            <div className="mr-[2px] flex h-[69px] gap-[5px] overflow-hidden pt-[2px] pl-[2px]">
              {models.map((m) => (
                <div key={m} className="flex h-[35px] w-[35px] shrink-0 flex-col items-center rounded-[6px] border border-[#b9b9b9] bg-[#e1e1e1] pt-[2px] font-['DejaVu_Sans',sans-serif] text-[8px] leading-[9px]">
                  <svg viewBox="0 0 34 22" className="h-[21px] w-[30px] shrink-0" preserveAspectRatio="none"><TileRouter /></svg>
                  <span className="mt-px whitespace-nowrap">{m}</span>
                </div>
              ))}
            </div>
            <div className={`mr-[2px] flex h-[17px] shrink-0 ${DITHER}`}>
              <ScrollBtn dir="left" />
              <Thumb className="w-[67px]" />
              <div className="flex-1" />
              <ScrollBtn dir="right" />
            </div>
          </div>
          <div className="mt-[2px] flex-1 border-t border-r border-l border-black pt-[2px] text-center text-[11px] leading-[14px]">2901</div>
        </div>
        <div className="w-[6px] shrink-0 border-r-2 border-[#777] bg-[#f0f0f0]" />
        <div className={`flex w-[16px] shrink-0 items-center pl-px ${DITHER}`}>
          <svg viewBox="0 0 9 10" className="mt-[4px] h-[10px] w-[9px]"><path d="M0 0v10l8.500-5z" fill="#606060" /></svg>
        </div>
        <div className="flex w-[168px] shrink-0 flex-col">
          <div className="flex h-[38px] shrink-0 pl-[3px]">
            <div className="flex h-[38px] w-[34px] items-center justify-center rounded-[5px] bg-[#10284c]">
              <div className="mt-[10px] flex h-4 w-4 items-center justify-center rounded-full bg-white text-[11px] font-bold text-[#10284c]">i</div>
            </div>
            <div className="mt-[14px] flex h-[19px] w-[122px] justify-between border-l-2 border-[#808080] pl-[4px] text-[11px] leading-[22px]">
              <span>Scenario 0</span>
              <div className="flex w-[16px] items-center justify-center border-r-2 border-b-2 border-[#808080] bg-[#efefef]">
                <svg viewBox="0 0 8 6" className="mt-[2px] h-[6px] w-2"><path d="M0 1h8L4 5z" /></svg>
              </div>
            </div>
          </div>
          <div className="mt-[10px] flex gap-[29px] pl-[30px]">
            <NavyBtn className="w-[33px]">New</NavyBtn>
            <NavyBtn className="w-[40px]">Delete</NavyBtn>
          </div>
          <NavyBtn className="mt-[9px] ml-[18px] w-[127px]">Toggle PDU List Window</NavyBtn>
        </div>
        <div className="flex flex-1 flex-col justify-end border-l-2 border-[#777]">
          <div className="flex h-[16px]"><ScrollBtn dir="left" /><Thumb className="flex-1" /></div>
        </div>
      </div>

      <div className="absolute top-[70px] right-0 flex h-[496px] w-[2px] flex-col">
        <div className="h-[31px] bg-[#10284c]" />
        <div className="h-[99px] border-t border-b border-[#777] bg-[#cfcfcf]" />
        <div className="h-[173px] bg-[repeating-linear-gradient(#c4c4c4_0_6px,#333_6px_7px,#d8d8c0_7px_11px,#444_11px_12px)]" />
        <div className="h-[35px] bg-[#10284c]" />
        <div className="flex-1 bg-[#cfcfcf]" />
        <div className="h-[34px] border-y-[5px] border-[#10284c] bg-[#057cac]" />
      </div>

      <Dialog />
    </div>
  );
}
